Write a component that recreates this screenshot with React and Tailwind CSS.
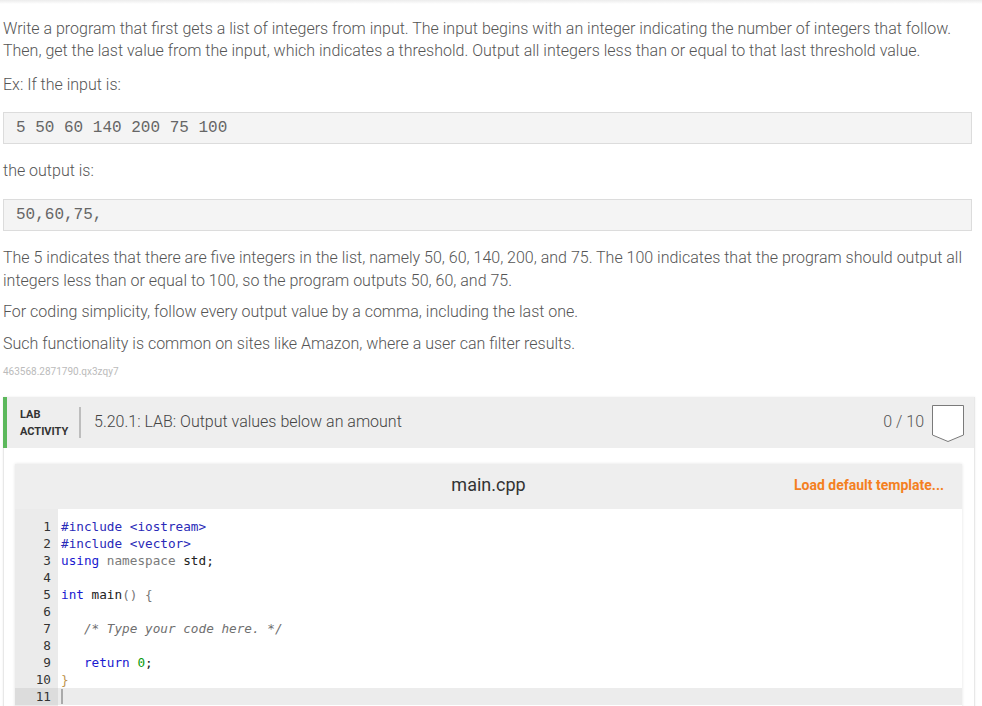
import React from 'react';

const codeLines = [
  [['#include <iostream>', 'text-[#2a2ab8]']],
  [['#include <vector>', 'text-[#2a2ab8]']],
  [['using', 'text-[#1a1ad0]'], [' namespace', 'text-[#7a7a7a]'], [' std;', 'text-[#222]']],
  [],
  [['int', 'text-[#1a1ad0]'], [' main', 'text-[#222]'], ['() {', 'text-[#777]']],
  [],
  [['   /* Type your code here. */', 'text-[#6f6f6f] italic']],
  [],
  [['   return', 'text-[#1a1ad0]'], [' 0', 'text-[#099a09]'], [';', 'text-[#222]']],
  [['}', 'text-[#c0964f]']],
  [],
];

const CodeBox = ({ children }) => (
  <div className="border border-[#dcdcdc] bg-[#f4f4f4] h-[32px] flex items-center pl-[12px] font-['Liberation_Mono',monospace] text-[16px] text-[#666]">
    {children}
  </div>
);

const Badge = () => (
  <svg width="33" height="39" viewBox="0 0 33 39">
    <polygon points="0.5,0.5 31.5,0.5 31.5,30 16,36.5 0.5,30" fill="#fff" stroke="#7a7a7a" strokeWidth="1" />
  </svg>
);

export default function App() {
  return (
    <div className="h-[706px] overflow-hidden bg-white font-['Roboto',sans-serif]">
      <div className="h-[4px] bg-gradient-to-b from-[#ececec] to-white" />
      <div className="pl-[3px] pr-[10px] pt-[14px] text-[16px] font-light leading-[22px] text-[#555]">
        <p>
          Write a program that first gets a list of integers from input. The input begins with an integer indicating the number of integers that follow. Then, get the last value from the input, which indicates a threshold. Output all integers less than or equal to that last threshold value.
        </p>
        <p className="mt-[12px]">Ex: If the input is:</p>
        <div className="mt-[16px]">
          <CodeBox>5 50 60 140 200 75 100</CodeBox>
        </div>
        <p className="mt-[16px]">the output is:</p>
        <div className="mt-[17px]">
          <CodeBox>50,60,75,</CodeBox>
        </div>
        <p className="mt-[15px] leading-[23px]">
          The 5 indicates that there are five integers in the list, namely 50, 60, 140, 200, and 75. The 100 indicates that the program should output all integers less than or equal to 100, so the program outputs 50, 60, and 75.
        </p>
        <p className="mt-[9px]">For coding simplicity, follow every output value by a comma, including the last one.</p>
        <p className="mt-[10px]">Such functionality is common on sites like Amazon, where a user can filter results.</p>
        <p className="mt-[11px] text-[10px] leading-[12px] font-normal text-[#bbb]">463568.2871790.qx3zqy7</p>
      </div>

      <div className="mt-[19px] ml-[3px] mr-[7px] border-r border-[#e8e8e8] shadow-[0_0_2px_rgba(0,0,0,0.08)]">
        <div className="h-[51px] bg-[#eeeeee] border-l-4 border-[#5cb85c] flex items-center pl-[13px] pr-[9px]">
          <div className="text-[11px] font-bold leading-[17px] text-[#333] w-[50px]">
            <div>LAB</div>
            <div>ACTIVITY</div>
          </div>
          <div className="w-[2px] h-[31px] bg-[#bdbdbd] ml-[9px] mr-[13px]" />
          <div className="flex-1 text-[16px] font-light text-[#444] pb-[1px]">5.20.1: LAB: Output values below an amount</div>
          <div className="text-[16px] font-light text-[#555] mr-[8px] pb-[1px]">0 / 10</div>
          <div className="pt-[3px]">
            <Badge />
          </div>
        </div>
        <div className="border-l border-[#e8e8e8] pl-[11px] pr-[12px] pt-[16px]">
          <div className="shadow-[0_0_3px_rgba(0,0,0,0.12)]">
            <div className="h-[45px] bg-[#eeeeee] relative flex items-center justify-center pb-[5px]">
              <span className="text-[18px] text-[#333]">main.cpp</span>
              <span className="absolute right-[18px] top-[11px] text-[14px] font-bold text-[#f4801f]">Load default template...</span>
            </div>
            <div className="bg-white font-['DejaVu_Sans_Mono',monospace] text-[12.7px] leading-[17px]">
              <div className="flex h-[9px]">
                <div className="w-[43px] bg-[#ebebeb]" />
              </div>
              {codeLines.map((line, i) => {
                const active = i === codeLines.length - 1;
                return (
                  <div key={i} className={`flex h-[17px] ${active ? 'bg-[#ececec]' : ''}`}>
                    <div className={`w-[43px] pr-[7px] text-right text-[#333] ${active ? 'bg-[#dcdcdc]' : 'bg-[#ebebeb]'}`}>{i + 1}</div>
                    <div className="pl-[3px] whitespace-pre flex items-center">
                      {line.map(([t, c], j) => (
                        <span key={j} className={c}>{t}</span>
                      ))}
                      {active && <span className="inline-block w-[2px] h-[15px] bg-[#aaa]" />}
                    </div>
                  </div>
                );
              })}
              <div className="flex h-[40px]">
                <div className="w-[43px] bg-[#ebebeb]" />
              </div>
            </div>
          </div>
        </div>
      </div>
    </div>
  );
}
